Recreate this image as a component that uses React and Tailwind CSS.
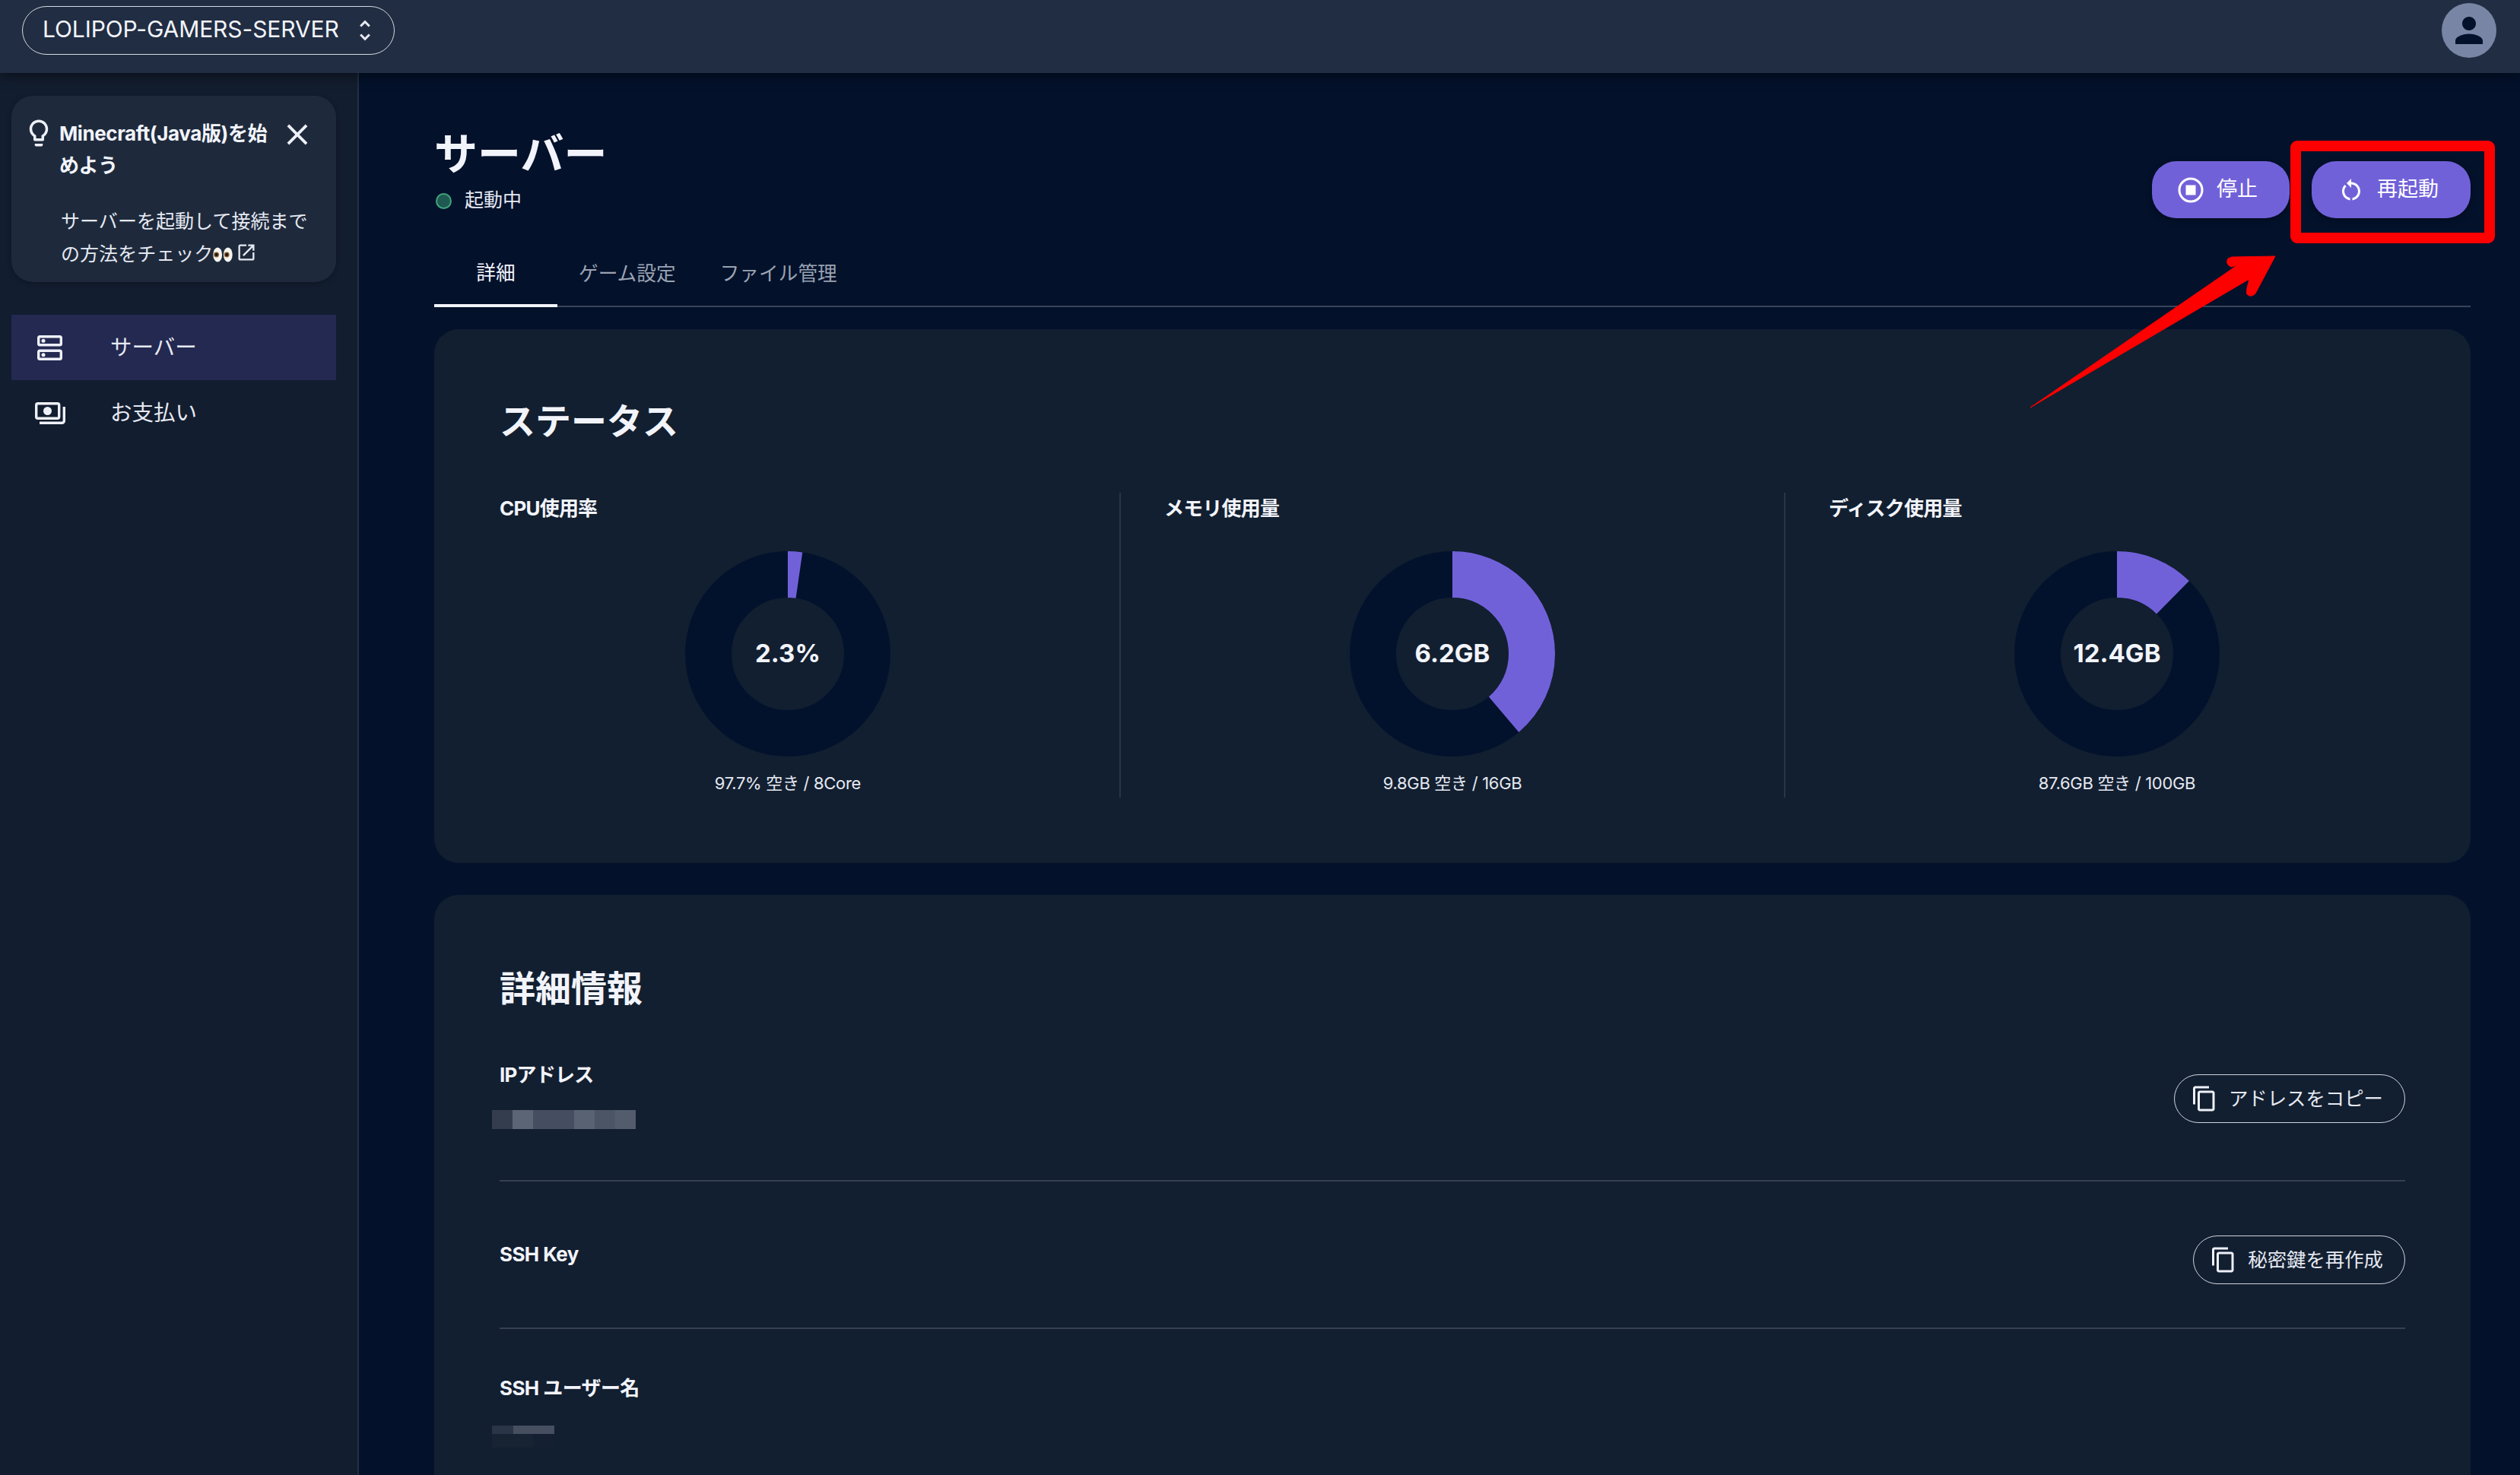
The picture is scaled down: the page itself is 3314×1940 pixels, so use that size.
const F = "font-['Inter','Noto_Sans_CJK_JP',sans-serif]";

function Mui({ d, className }) {
  return (
    <svg viewBox="0 0 24 24" fill="currentColor" className={className}>
      <path d={d} />
    </svg>
  );
}

const ICONS = {
  unfold: "M12 5.83 15.17 9l1.41-1.41L12 3 7.41 7.59 8.83 9 12 5.83zm0 12.34L8.83 15l-1.41 1.41L12 21l4.59-4.59L15.17 15 12 18.17z",
  person: "M12 12c2.21 0 4-1.79 4-4s-1.79-4-4-4-4 1.79-4 4 1.79 4 4 4zm0 2c-2.67 0-8 1.34-8 4v2h16v-2c0-2.66-5.33-4-8-4z",
  bulb: "M9 21c0 .55.45 1 1 1h4c.55 0 1-.45 1-1v-1H9v1zm3-19C8.14 2 5 5.14 5 9c0 2.38 1.19 4.47 3 5.74V17c0 .55.45 1 1 1h6c.55 0 1-.45 1-1v-2.26c1.81-1.27 3-3.36 3-5.74 0-3.86-3.14-7-7-7zm2.85 11.1-.85.6V16h-4v-2.3l-.85-.6C7.8 12.16 7 10.63 7 9c0-2.76 2.24-5 5-5s5 2.24 5 5c0 1.63-.8 3.16-2.15 4.1z",
  close: "M19 6.41 17.59 5 12 10.59 6.41 5 5 6.41 10.59 12 5 17.59 6.41 19 12 13.41 17.59 19 19 17.59 13.41 12z",
  open: "M19 19H5V5h7V3H5c-1.11 0-2 .9-2 2v14c0 1.1.89 2 2 2h14c1.1 0 2-.9 2-2v-7h-2v7zM14 3v2h3.59l-9.83 9.83 1.41 1.41L19 6.41V10h2V3h-7z",
  restart: "M12 5V2L8 6l4 4V7c3.31 0 6 2.69 6 6 0 2.97-2.17 5.43-5 5.91v2.02c3.95-.49 7-3.85 7-7.93 0-4.42-3.58-8-8-8zm-6 8c0-1.65.67-3.15 1.76-4.24L6.34 7.34C4.9 8.79 4 10.79 4 13c0 4.08 3.05 7.44 7 7.93v-2.02c-2.83-.48-5-2.94-5-5.91z",
  copy: "M16 1H4c-1.1 0-2 .9-2 2v14h2V3h12V1zm3 4H8c-1.1 0-2 .9-2 2v14c0 1.1.9 2 2 2h11c1.1 0 2-.9 2-2V7c0-1.1-.9-2-2-2zm0 16H8V7h11v14z",
};

function ServerIcon() {
  return (
    <svg viewBox="0 0 33 33" className="w-[33px] h-[33px] text-[#eef0f8]" fill="none" stroke="currentColor" strokeWidth="3.4">
      <rect x="1.7" y="1.7" width="29.6" height="11" rx="1.8" />
      <rect x="1.7" y="20.3" width="29.6" height="11" rx="1.8" />
      <circle cx="8" cy="7.2" r="2.5" fill="currentColor" stroke="none" />
      <circle cx="8" cy="25.8" r="2.5" fill="currentColor" stroke="none" />
    </svg>
  );
}

function PayIcon() {
  return (
    <svg viewBox="0 0 40 29" className="w-10 h-[29px] text-[#eef0f8]" fill="none" stroke="currentColor" strokeWidth="3.4">
      <rect x="1.7" y="1.7" width="30" height="19.6" rx="2" />
      <circle cx="16.5" cy="11.5" r="5.5" fill="currentColor" stroke="none" />
      <path d="M38.3 6v18.5a2.8 2.8 0 0 1-2.8 2.8h-29.5" />
    </svg>
  );
}

function StopIcon() {
  return (
    <svg viewBox="0 0 34 34" className="w-[34px] h-[34px]" fill="none" stroke="currentColor" strokeWidth="3">
      <circle cx="17" cy="17" r="15" />
      <rect x="10.5" y="10.5" width="13" height="13" fill="currentColor" stroke="none" />
    </svg>
  );
}

function Eyes() {
  return (
    <svg viewBox="0 0 26 20" className="w-[26px] h-5 inline-block align-[-2px]">
      <ellipse cx="6.2" cy="10" rx="5.9" ry="9.5" fill="#f5f3ee" />
      <ellipse cx="19.8" cy="10" rx="5.9" ry="9.5" fill="#f5f3ee" />
      <circle cx="4.6" cy="10" r="3.4" fill="#8a5a2c" />
      <circle cx="18.2" cy="10" r="3.4" fill="#8a5a2c" />
      <circle cx="4.6" cy="10" r="2" fill="#1c1410" />
      <circle cx="18.2" cy="10" r="2" fill="#1c1410" />
    </svg>
  );
}

function Donut({ pct }) {
  const r = 104.5;
  const c = 2 * Math.PI * r;
  return (
    <svg viewBox="0 0 270 270" className="w-[270px] h-[270px] -rotate-90">
      <circle cx="135" cy="135" r={r} fill="none" stroke="#03122c" strokeWidth="61" />
      <circle cx="135" cy="135" r={r} fill="none" stroke="#7161d9" strokeWidth="61" strokeDasharray={`${(c * pct) / 100} ${c}`} />
    </svg>
  );
}

function Gauge({ label, value, pct, caption }) {
  return (
    <div className="flex-1 pt-[3px]">
      <div className="text-[26px] leading-[36px] font-bold text-[#f2f4fb] tracking-[-0.8px]">{label}</div>
      <div className="relative w-[270px] h-[270px] mx-auto mt-[38px]">
        <Donut pct={pct} />
        <div className="absolute inset-0 flex items-center justify-center text-[33px] font-bold text-[#f2f4fb]">{value}</div>
      </div>
      <div className="mt-5 text-center text-[22px] leading-[30px] text-[#e6e9f2] tracking-[-0.3px]">{caption}</div>
    </div>
  );
}

function OutlineButton({ children }) {
  return (
    <button className="h-16 rounded-[32px] border-[1.5px] border-[#cfd4de] pl-[21px] pr-7 flex items-center gap-[14px] text-[25.4px] text-[#e6e9f2]">
      <Mui d={ICONS.copy} className="w-9 h-9 text-[#eef0f8]" />
      {children}
    </button>
  );
}

function Pixels({ blocks, h }) {
  return (
    <div className="flex -ml-[10px]">
      {blocks.map(([w, color], i) => (
        <div key={i} className={h} style={{ width: w, backgroundColor: color }} />
      ))}
    </div>
  );
}

export default function App() {
  return (
    <div className={`${F} relative w-[3314px] h-[1940px] overflow-hidden bg-[#03112b] flex flex-col text-white`}>
      <header className="relative z-10 h-24 shrink-0 bg-[#212d42] shadow-[0_4px_16px_rgba(0,0,0,0.45)] flex items-center justify-between pl-[29px] pr-[31px]">
        <div className="-mt-[16px] h-[64px] w-[490px] rounded-[32px] border-[1.5px] border-[#d5d9e2] flex items-center pl-[26px] pr-5 justify-between">
          <span className="text-[30px] tracking-[-0.1px] text-[#f2f4fb] -translate-y-[2px]">LOLIPOP-GAMERS-SERVER</span>
          <Mui d={ICONS.unfold} className="w-9 h-9 text-[#e6e9f2]" />
        </div>
        <div className="-mt-[16px] w-[72px] h-[72px] rounded-full bg-[#7985a4] flex items-center justify-center">
          <Mui d={ICONS.person} className="w-[54px] h-[54px] text-[#03112b]" />
        </div>
      </header>

      <div className="flex flex-1 min-h-0">
        <aside className="w-[472px] shrink-0 bg-[#121d2f] border-r-2 border-[#232f42] pt-[30px] px-[15px]">
          <div className="w-[427px] h-[245px] rounded-[28px] bg-[#1e2a3c] shadow-[0_2px_6px_rgba(0,0,0,0.25)] pt-[28px] pl-[17px] pr-[26px]">
            <div className="flex items-start">
              <Mui d={ICONS.bulb} className="w-[42px] h-[42px] text-[#eef0f8] -ml-[2px] shrink-0" />
              <div className="w-[290px] shrink-0 text-[26px] leading-[42px] font-bold text-[#f2f4fb] ml-[6px] tracking-[-0.4px] pr-[10px] mt-[1px]">Minecraft(Java版)を始めよう</div>
              <Mui d={ICONS.close} className="w-[46px] h-[46px] text-[#eef0f8] shrink-0" />
            </div>
            <div className="mt-[31px] ml-[48px] text-[25px] leading-[43px] text-[#e6e9f2] tracking-[0.05px] whitespace-nowrap">
              サーバーを起動して接続まで
              <br />
              の方法をチェック<Eyes />
              <Mui d={ICONS.open} className="inline-block w-7 h-7 ml-[4px] align-[-3px]" />
            </div>
          </div>
          <nav className="mt-[43px] w-[427px]">
            <div className="h-[86px] bg-[#232950] flex items-center pl-[34px]">
              <ServerIcon />
              <span className="ml-[63px] text-[28.5px] text-[#e6e9f2]">サーバー</span>
            </div>
            <div className="h-[87px] flex items-center pl-[31px]">
              <PayIcon />
              <span className="ml-[59px] text-[28.5px] text-[#e6e9f2]">お支払い</span>
            </div>
          </nav>
        </aside>

        <main className="flex-1 min-w-0 pl-[99px] pr-[65px] pt-[71px]">
          <div className="flex justify-between items-start">
            <div>
              <h1 className="text-[57px] leading-[72px] font-bold text-[#f2f4fb]">サーバー</h1>
              <div className="mt-2 h-[34px] flex items-center">
                <span className="ml-[2px] w-[21px] h-[21px] rounded-full bg-[#1f5a52] border-2 border-[#3fa37c]" />
                <span className="ml-[17px] text-[25px] text-[#e6e9f2]">起動中</span>
              </div>
            </div>
            <div className="flex gap-[29px] mt-[45px]">
              <button className="w-[181px] h-[75px] rounded-[32px] bg-[#7161d9] shadow-[0_3px_8px_rgba(0,0,0,0.3)] flex items-center pl-[34px] gap-[17px] text-[27px] text-white">
                <StopIcon />
                停止
              </button>
              <button className="w-[209px] h-[75px] rounded-[32px] bg-[#7161d9] shadow-[0_3px_8px_rgba(0,0,0,0.3)] flex items-center pl-[34px] gap-[16px] text-[27px] text-white">
                <Mui d={ICONS.restart} className="w-[36px] h-[36px]" />
                再起動
              </button>
            </div>
          </div>

          <div className="mt-[31px] h-[86px] border-b-2 border-[#3a4458] flex text-[25.7px]">
            <div className="w-[162px] h-[86px] border-b-4 border-[#f2f4fb] flex items-center justify-center text-[#f2f4fb]">詳細</div>
            <div className="px-[28px] flex items-center text-[#9aa3b2] h-[84px]">ゲーム設定</div>
            <div className="px-[30px] flex items-center text-[#9aa3b2] h-[84px]">ファイル管理</div>
          </div>

          <section className="mt-[29px] h-[702px] rounded-[32px] bg-[#121f30] pt-[89px] px-[86px]">
            <h2 className="text-[47px] leading-[64px] font-bold text-[#f2f4fb]">ステータス</h2>
            <div className="mt-[62px] flex h-[401px]">
              <Gauge label="CPU使用率" value="2.3%" pct={2.3} caption="97.7% 空き / 8Core" />
              <div className="w-[2px] bg-[#2a3547] mx-[57px]" />
              <Gauge label="メモリ使用量" value="6.2GB" pct={38.75} caption="9.8GB 空き / 16GB" />
              <div className="w-[2px] bg-[#2a3547] mx-[57px]" />
              <Gauge label="ディスク使用量" value="12.4GB" pct={12.4} caption="87.6GB 空き / 100GB" />
            </div>
          </section>

          <section className="mt-[42px] rounded-[32px] bg-[#121f30] h-[900px] pt-[91px] px-[86px]">
            <h2 className="text-[47px] leading-[64px] font-bold text-[#f2f4fb]">詳細情報</h2>
            <div className="mt-[64px] h-[158px] border-b-2 border-[#364052] flex justify-between items-start">
              <div>
                <div className="text-[26px] leading-[36px] font-bold text-[#f2f4fb] tracking-[-0.8px]">IPアドレス</div>
                <div className="mt-[28px]">
                  <Pixels
                    h="h-[25px]"
                    blocks={[
                      [27, "#333d4d"],
                      [27, "#5b6575"],
                      [54, "#454e60"],
                      [27, "#586272"],
                      [27, "#4b5566"],
                      [27, "#535c6d"],
                    ]}
                  />
                </div>
              </div>
              <div className="mt-[17px]">
                <OutlineButton>アドレスをコピー</OutlineButton>
              </div>
            </div>
            <div className="h-[194px] border-b-2 border-[#364052] pt-[71px] flex justify-between items-start">
              <div className="mt-[7px] text-[26px] leading-[36px] font-bold text-[#f2f4fb] tracking-[-0.6px]">SSH Key</div>
              <OutlineButton>秘密鍵を再作成</OutlineButton>
            </div>
            <div className="pt-[60px]">
              <div className="text-[26px] leading-[36px] font-bold text-[#f2f4fb] tracking-[-0.6px]">SSH ユーザー名</div>
              <div className="mt-[31px]">
                <Pixels
                  h="h-[11px]"
                  blocks={[
                    [28, "#2a3547"],
                    [54, "#454f60"],
                  ]}
                />
                <Pixels
                  h="h-[18px]"
                  blocks={[
                    [54, "#172233"],
                    [28, "#141f31"],
                  ]}
                />
              </div>
            </div>
          </section>
        </main>
      </div>

      <svg className="absolute left-[2650px] top-[170px] w-[650px] h-[380px] pointer-events-none" viewBox="2650 170 650 380">
        <rect x="3019" y="192" width="255" height="121" rx="2" fill="none" stroke="#ff0000" strokeWidth="14" />
        <path
          d="M2670 536 L2942 349 L2934 351 Q2926 347 2930 340 L2935 338 L2992 337 L2966 386 Q2960 392 2955 387 Q2954 384 2955 379 L2958 367 Z"
          fill="#ff0000"
          stroke="#ff0000"
          strokeLinejoin="round"
          strokeWidth="1"
        />
      </svg>
    </div>
  );
}
